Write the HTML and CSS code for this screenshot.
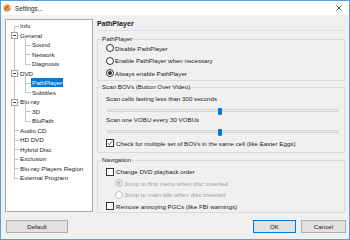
FILE: index.html
```html
<!DOCTYPE html>
<html>
<head>
<meta charset="utf-8">
<link rel="stylesheet" href="styles.css">
</head>
<body>
<div class="window">
  <div class="titlebar">
    <svg class="app-icon" viewBox="0 0 8 8" width="8" height="8">
      <circle cx="4" cy="4" r="3.7" fill="#f0b44c"/>
      <path d="M1.2 5.8 C2 2.5 4.5 1.2 7 2.2 C5 2.4 3.4 3.8 2.8 6.6 Z" fill="#b4602a"/>
      <path d="M3.2 7.4 C4 5 5.6 4 7.6 4.2 C6.8 6 5.4 7.3 3.2 7.4 Z" fill="#d9822f"/>
    </svg>
    <span class="title">Settings...</span>
    <svg class="close" viewBox="0 0 6 6" width="6" height="6">
      <path d="M0.5 0.5 L5.5 5.5 M5.5 0.5 L0.5 5.5" stroke="#333" stroke-width="0.8" fill="none"/>
    </svg>
  </div>

  <div class="main">
    <div class="tree">
      <ul class="root">
        <li class="node"><span class="label">Info</span></li>
        <li class="node"><span class="toggle"></span><span class="label">General</span></li>
        <li class="kids">
          <ul class="children">
            <li class="node sub"><span class="label">Sound</span></li>
            <li class="node sub"><span class="label">Network</span></li>
            <li class="node sub"><span class="label">Diagnosis</span></li>
          </ul>
        </li>
        <li class="node"><span class="toggle"></span><span class="label">DVD</span></li>
        <li class="kids">
          <ul class="children">
            <li class="node sub sel"><span class="label">PathPlayer</span></li>
            <li class="node sub"><span class="label">Subtitles</span></li>
          </ul>
        </li>
        <li class="node"><span class="toggle"></span><span class="label">Blu-ray</span></li>
        <li class="kids">
          <ul class="children">
            <li class="node sub"><span class="label">3D</span></li>
            <li class="node sub"><span class="label">BluPath</span></li>
          </ul>
        </li>
        <li class="node"><span class="label">Audio CD</span></li>
        <li class="node"><span class="label">HD DVD</span></li>
        <li class="node"><span class="label">Hybrid Disc</span></li>
        <li class="node"><span class="label">Exclusion</span></li>
        <li class="node"><span class="label">Blu-ray Players Region</span></li>
        <li class="node"><span class="label">External Program</span></li>
      </ul>
    </div>

    <div class="panel">
      <div class="panel-header">PathPlayer</div>

      <fieldset class="group g1">
        <legend>PathPlayer</legend>
        <div class="rows">
          <div class="opt"><span class="radio"></span><span>Disable PathPlayer</span></div>
          <div class="opt"><span class="radio"></span><span>Enable PathPlayer when necessary</span></div>
          <div class="opt"><span class="radio on"></span><span>Always enable PathPlayer</span></div>
        </div>
      </fieldset>

      <fieldset class="group g2">
        <legend>Scan BOVs (Button Over Video)</legend>
        <div class="rows">
          <div class="text-row">Scan cells lasting less than 300 seconds</div>
          <div class="slider"><div class="track"></div><div class="thumb"></div></div>
          <div class="text-row">Scan one VOBU every 30 VOBUs</div>
          <div class="slider"><div class="track"></div><div class="thumb"></div></div>
          <div class="opt check-row"><span class="check on"><svg viewBox="0 0 8 8" width="6" height="6"><path d="M1 4.2 L3 6.2 L7 1.6" stroke="#222" stroke-width="1" fill="none"/></svg></span><span>Check for multiple set of BOVs in the same cell (like Easter Eggs)</span></div>
        </div>
      </fieldset>

      <fieldset class="group g3">
        <legend>Navigation</legend>
        <div class="rows">
          <div class="opt"><span class="check"></span><span>Change DVD playback order</span></div>
          <div class="opt indent disabled"><span class="radio on"></span><span>Jump to first menu when disc inserted</span></div>
          <div class="opt indent disabled"><span class="radio"></span><span>Jump to main title when disc inserted</span></div>
          <div class="opt"><span class="check"></span><span>Remove annoying PGCs (like FBI warnings)</span></div>
        </div>
      </fieldset>
    </div>
  </div>

  <div class="footer">
    <button class="btn btn-default">Default</button>
    <div class="spacer"></div>
    <button class="btn btn-ok">OK</button>
    <button class="btn btn-cancel">Cancel</button>
  </div>
</div>
</body>
</html>
```

FILE: styles.css
```css
* { box-sizing: border-box; }
html, body { margin: 0; padding: 0; }
body {
  width: 350px;
  height: 240px;
  overflow: hidden;
  font-family: "Liberation Sans", Arial, sans-serif;
  font-size: 6.2px;
  color: #1a1a1a;
  background: #fff;
}
.window {
  width: 350px;
  height: 240px;
  border: 1px solid #5aa0df;
  background: #f0f0f0;
  display: flex;
  flex-direction: column;
}
.titlebar {
  height: 14px;
  flex: none;
  background: #fff;
  display: flex;
  align-items: center;
  padding-left: 2px;
  padding-right: 7px;
}
.app-icon { margin-right: 4px; flex: none; }
.title { font-size: 6.3px; flex: 1; }
.close { flex: none; }

.main {
  padding: 4px 4px 0 4px;
  display: grid;
  grid-template-columns: 88px 1fr;
  column-gap: 4px;
  align-items: start;
}

/* tree */
.tree {
  height: 193px;
  background: #fff;
  border: 1px solid #a8a8a8;
  padding-top: 1px;
  overflow: hidden;
}
.tree ul { list-style: none; margin: 0; padding: 0; }
.root { position: relative; }
.root::before {
  content: "";
  position: absolute;
  left: 8px;
  top: 4.75px;
  bottom: 4.75px;
  border-left: 1px solid #c4c4c4;
}
.node {
  position: relative;
  height: 9.5px;
  line-height: 9.5px;
  padding-left: 13px;
  white-space: nowrap;
}
.node::before {
  content: "";
  position: absolute;
  left: 8px;
  top: 4.5px;
  width: 5px;
  border-top: 1px solid #c4c4c4;
}
.label { padding: 0 1px; display: inline-block; line-height: 9px; }
.toggle {
  position: absolute;
  left: 5px;
  top: 1.5px;
  width: 7px;
  height: 7px;
  border: 1px solid #a0a0a0;
  background: #fff;
  z-index: 1;
}
.toggle::after {
  content: "";
  position: absolute;
  left: 1px;
  top: 2px;
  width: 3px;
  border-top: 1px solid #444;
}
.children { position: relative; }
.children::before {
  content: "";
  position: absolute;
  left: 19px;
  top: -4.5px;
  bottom: 4.75px;
  border-left: 1px solid #c4c4c4;
}
.node.sub { padding-left: 25px; }
.node.sub::before { left: 19px; width: 6px; }
.node.sel .label { background: #0078d7; color: #fff; }

/* right panel */
.panel { display: flex; flex-direction: column; }
.panel-header {
  height: 12px;
  line-height: 11px;
  font-weight: bold;
  font-size: 7.1px;
  border-bottom: 1px solid #d9e3ec;
}
.group {
  border: 1px solid #dcdcdc;
  margin: 0;
  padding: 0;
  min-width: 0;
}
.group legend {
  padding: 0 1px;
  margin-left: 3px;
  line-height: 8px;
  height: 8px;
}
.rows { padding-left: 8px; display: flex; flex-direction: column; }
.opt { display: flex; align-items: center; white-space: nowrap; }
.g1 { margin-top: 4px; }
.g1 .rows { margin-top: -1px; }
.g1 .opt { height: 12.5px; }
.g2 { margin-top: 2.5px; }
.g2 .rows { padding-top: 2.5px; padding-bottom: 3px; }
.text-row { height: 9px; line-height: 9px; padding-left: 0; }
.slider {
  position: relative;
  height: 12px;
  padding-top: 3px;
  margin: 0 6px 0 1px;
  display: flex;
  align-items: center;
}
.track {
  width: 100%;
  height: 3px;
  border: 1px solid #d6d6d6;
  background: #e7e7e7;
}
.thumb {
  position: absolute;
  left: 111px;
  top: 5.5px;
  width: 4px;
  height: 7px;
  background: #0078d7;
  border-radius: 1px 1px 1.5px 1.5px;
}
.check-row { height: 12px; margin-top: 1.5px; }
.g3 { margin-top: 3px; }
.g3 .rows { padding-top: 2px; }
.g3 .opt { height: 11.5px; }
.radio {
  width: 8px;
  height: 8px;
  border: 1px solid #333;
  border-radius: 50%;
  background: #fff;
  margin-right: 1px;
  display: inline-flex;
  align-items: center;
  justify-content: center;
  flex: none;
}
.radio.on::after {
  content: "";
  width: 4px;
  height: 4px;
  border-radius: 50%;
  background: #333;
}
.check {
  width: 8px;
  height: 8px;
  border: 1px solid #333;
  background: #fff;
  margin-right: 2px;
  display: inline-flex;
  align-items: center;
  justify-content: center;
  flex: none;
}
.indent { padding-left: 9px; }
.disabled { color: #a0a0a0; }
.disabled .radio { border-color: #bcbcbc; }
.disabled .radio.on::after { background: #bcbcbc; }

/* footer */
.footer {
  display: flex;
  align-items: center;
  padding: 7px 3px 0 5px;
}
.spacer { flex: 1; }
.btn {
  height: 13px;
  border: 1px solid #adadad;
  background: #e1e1e1;
  font-family: "Liberation Sans", Arial, sans-serif;
  font-size: 6.2px;
  color: #1a1a1a;
  padding: 0;
  margin: 0;
}
.btn-default { width: 62px; }
.btn-ok { width: 43px; border-color: #0078d7; margin-right: 5px; }
.btn-cancel { width: 45px; }
```
